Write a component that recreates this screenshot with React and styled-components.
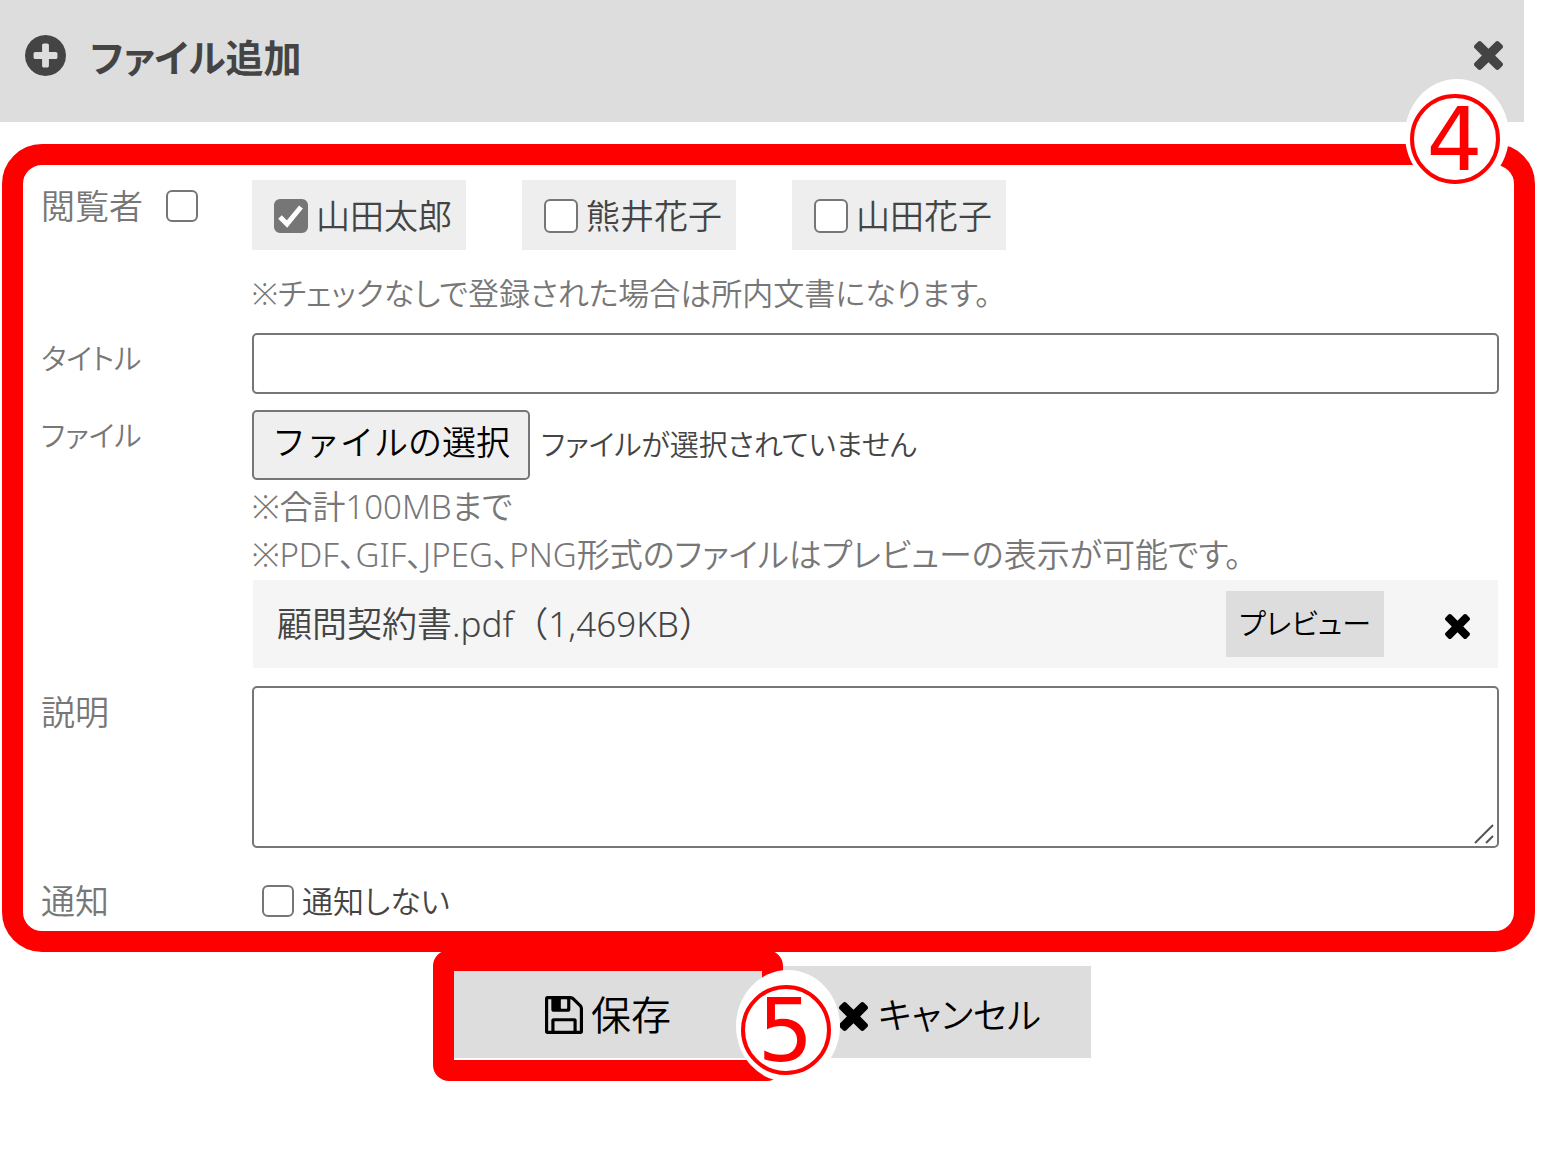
import React, { useRef, useState } from 'react'
import styled, { createGlobalStyle, css } from 'styled-components'

const members = [
  { id: 'm1', name: '山田太郎', checked: true },
  { id: 'm2', name: '熊井花子', checked: false },
  { id: 'm3', name: '山田花子', checked: false },
]

function TimesIcon({ size }) {
  return (
    <svg width={size} height={size} viewBox="302 366 1188 1188" fill="currentColor" aria-hidden="true">
      <path d="M1490 1322q0 40-28 68l-136 136q-28 28-68 28t-68-28l-294-294-294 294q-28 28-68 28t-68-28l-136-136q-28-28-28-68t28-68l294-294-294-294q-28-28-28-68t28-68l136-136q28-28 68-28t68 28l294 294 294-294q28-28 68-28t68 28l136 136q28 28 28 68t-28 68l-294 294 294 294q28 28 28 68z" />
    </svg>
  )
}

function PlusCircleIcon({ size }) {
  return (
    <svg width={size} height={size} viewBox="128 128 1536 1536" fill="currentColor" aria-hidden="true">
      <path d="M1344 960v-128q0-26-19-45t-45-19h-256v-256q0-26-19-45t-45-19h-128q-26 0-45 19t-19 45v256h-256q-26 0-45 19t-19 45v128q0 26 19 45t45 19h256v256q0 26 19 45t45 19h128q26 0 45-19t19-45v-256h256q26 0 45-19t19-45zm320-64q0 209-103 385.5t-279.5 279.5-385.5 103-385.5-103-279.5-279.5-103-385.5 103-385.5 279.5-279.5 385.5-103 385.5 103 279.5 279.5 103 385.5z" />
    </svg>
  )
}

function FloppyIcon({ size }) {
  return (
    <svg width={size} height={size} viewBox="128 128 1536 1536" fill="currentColor" aria-hidden="true">
      <path d="M512 1536h768v-384h-768v384zm896 0h128v-896q0-14-10-38.5t-20-34.5l-281-281q-10-10-34-20t-39-10v416q0 40-28 68t-68 28h-576q-40 0-68-28t-28-68v-416h-128v1280h128v-416q0-40 28-68t68-28h832q40 0 68 28t28 68v416zm-384-928v-320q0-13-9.5-22.5t-22.5-9.5h-192q-13 0-22.5 9.5t-9.5 22.5v320q0 13 9.5 22.5t22.5 9.5h192q13 0 22.5-9.5t9.5-22.5zm640 32v928q0 40-28 68t-68 28h-1344q-40 0-68-28t-28-68v-1344q0-40 28-68t68-28h928q40 0 88 20t76 48l280 280q28 28 48 76t20 88z" />
    </svg>
  )
}

export default function App() {
  const fileRef = useRef(null)
  const [viewers, setViewers] = useState(members)

  const toggle = (id) =>
    setViewers(viewers.map((v) => (v.id === id ? { ...v, checked: !v.checked } : v)))

  return (
    <Page>
      <GlobalStyle />
      <Header>
        <PlusCircleIcon size={41} />
        <h1>ファイル追加</h1>
        <IconButton type="button" aria-label="閉じる">
          <TimesIcon size={29} />
        </IconButton>
      </Header>

      <Form>
        <Badge $spot="form"><span>4</span></Badge>

        <Row>
          <Label as="div">
            <label htmlFor="all">閲覧者</label>
            <Check id="all" type="checkbox" $size={32} />
          </Label>
          <div>
            <Chips>
              {viewers.map((v) => (
                <Chip key={v.id}>
                  <Check type="checkbox" $size={34} checked={v.checked} onChange={() => toggle(v.id)} />
                  <span>{v.name}</span>
                </Chip>
              ))}
            </Chips>
            <Note $top={19} $size={31}>※チェックなしで登録された場合は所内文書になります。</Note>
          </div>
        </Row>

        <Row>
          <Label htmlFor="title" $kana>タイトル</Label>
          <TextInput id="title" type="text" />
        </Row>

        <Row>
          <Label htmlFor="file" $kana>ファイル</Label>
          <div>
            <Picker>
              <input ref={fileRef} id="file" type="file" tabIndex={-1} />
              <PickButton type="button" onClick={() => fileRef.current.click()}>ファイルの選択</PickButton>
              <span>ファイルが選択されていません</span>
            </Picker>
            <Note $top={3}>※合計100MBまで</Note>
            <Note>※PDF、GIF、JPEG、PNG形式のファイルはプレビューの表示が可能です。</Note>
            <FileItem>
              <span>顧問契約書.pdf（1,469KB）</span>
              <PreviewButton type="button">プレビュー</PreviewButton>
              <IconButton type="button" aria-label="削除" $dark>
                <TimesIcon size={25} />
              </IconButton>
            </FileItem>
          </div>
        </Row>

        <Row>
          <Label htmlFor="memo">説明</Label>
          <MemoBox>
            <textarea id="memo" />
            <svg width="22" height="22" viewBox="0 0 22 22" stroke="#555" strokeWidth="2" aria-hidden="true">
              <path d="M1 20L19 2M12 20L19 13" />
            </svg>
          </MemoBox>
        </Row>

        <Row $top={11}>
          <Label as="div">通知</Label>
          <Option>
            <Check type="checkbox" $size={32} />
            通知しない
          </Option>
        </Row>
      </Form>

      <Actions>
        <SaveFrame>
          <SaveButton type="button">
            <FloppyIcon size={38} />
            保存
          </SaveButton>
          <Badge $spot="save"><span>5</span></Badge>
        </SaveFrame>
        <CancelButton type="button">
          <TimesIcon size={29} />
          キャンセル
        </CancelButton>
      </Actions>
    </Page>
  )
}

const GlobalStyle = createGlobalStyle`
*{
  box-sizing: border-box;
}

body{
  margin: 0;
  background-color: #fff;
}

button, input, textarea{
  font: inherit;
  margin: 0;
}
`

const Page = styled.main`
  min-height: 100vh;
  color: #444;
  font-family: "Noto Sans", "Noto Sans CJK JP", sans-serif;
  font-size: 34px;
  font-weight: 350;
  line-height: 48px;
  font-feature-settings: "palt";
`

const Header = styled.header`
  display: flex;
  align-items: center;
  height: 122px;
  margin-right: 37px;
  padding: 0 21px 12px 25px;
  background-color: #ddd;

  h1{
    flex: 1;
    margin: 0 0 0 24px;
    padding-top: 4px;
    font-size: 38px;
    font-weight: 700;
  }
`

const IconButton = styled.button`
  display: flex;
  padding: ${(p) => (p.$dark ? '5px 0 0' : '0')};
  border: none;
  background: none;
  color: ${(p) => (p.$dark ? '#000' : '#444')};
  cursor: pointer;
`

const Form = styled.form`
  position: relative;
  display: flex;
  flex-direction: column;
  gap: 16px;
  margin: 22px 26px 0 2px;
  padding: 15px 15px 6px 18px;
  border: 21px solid #f00;
  border-radius: 40px;
`

const spots = {
  form: css`
    top: -86px;
    right: 5px;
  `,
  save: css`
    top: -1px;
    right: -78px;
  `,
}

/* numbered marker lying over a frame */
const Badge = styled.div`
  position: absolute;
  z-index: 2;
  display: flex;
  align-items: center;
  justify-content: center;
  width: 104px;
  height: 112px;
  padding: 8px 5px 0 0;
  border-radius: 50%;
  background-color: #fff;

  span{
    width: 90px;
    height: 90px;
    border: 4px solid #f00;
    border-radius: 50%;
    color: #f00;
    font-family: "DejaVu Sans", sans-serif;
    font-size: 88px;
    font-weight: 400;
    line-height: 84px;
    text-align: center;
  }
  ${(p) => spots[p.$spot]}
`

const Row = styled.div`
  display: grid;
  grid-template-columns: 211px minmax(0, 1fr);
  align-items: start;
  margin-top: ${(p) => p.$top || 0}px;
`

const Label = styled.label`
  display: flex;
  align-items: center;
  gap: 23px;
  padding-top: 2px;
  color: #777;
  font-size: ${(p) => (p.$kana ? 29 : 34)}px;
`

const Check = styled.input`
  appearance: none;
  flex: none;
  width: ${(p) => p.$size}px;
  height: ${(p) => p.$size}px;
  border: 2px solid #767676;
  border-radius: 6px;
  background: #fff center / 26px no-repeat;

  &:checked{
    background-color: #767676;
    background-image: url("data:image/svg+xml,%3Csvg xmlns='http://www.w3.org/2000/svg' viewBox='0 0 26 26'%3E%3Cpath d='M2 14l7 7L23 4' fill='none' stroke='white' stroke-width='5'/%3E%3C/svg%3E");
  }
`

const Chips = styled.div`
  display: flex;
  flex-wrap: wrap;
  gap: 16px 56px;
`

const Chip = styled.label`
  display: flex;
  align-items: center;
  gap: 8px;
  height: 70px;
  padding: 2px 14px 0 22px;
  background-color: #eee;
`

const Note = styled.p`
  margin: ${(p) => p.$top || 0}px 0 0;
  color: #777;
  font-size: ${(p) => p.$size || 33}px;
`

const fieldBorder = css`
  border: 2px solid #767676;
  border-radius: 5px;
`

const TextInput = styled.input`
  width: 100%;
  height: 61px;
  padding: 0 8px;
  ${fieldBorder}
`

const Picker = styled.div`
  display: flex;
  align-items: center;
  gap: 11px;

  input{
    position: absolute;
    width: 1px;
    height: 1px;
    opacity: 0;
  }

  span{
    font-size: 29px;
  }
`

const PickButton = styled.button`
  height: 70px;
  padding: 0 18px 6px;
  background-color: #efefef;
  color: #000;
  font-feature-settings: normal;
  ${fieldBorder}
`

const FileItem = styled.div`
  display: flex;
  align-items: center;
  height: 88px;
  margin: 1px 1px 2px;
  padding: 0 28px 0 24px;
  background-color: #f5f5f5;

  span{
    flex: 1;
    font-size: 35px;
    font-feature-settings: normal;
  }
`

const PreviewButton = styled.button`
  height: 66px;
  margin-right: 61px;
  padding: 0 13px;
  border: none;
  background-color: #ddd;
  color: #000;
  font-size: 29px;
`

const MemoBox = styled.div`
  position: relative;
  display: flex;

  textarea{
    width: 100%;
    height: 162px;
    padding: 8px;
    resize: none;
    ${fieldBorder}
  }

  svg{
    position: absolute;
    right: 3px;
    bottom: 3px;
  }
`

const Option = styled.label`
  display: flex;
  align-items: center;
  gap: 8px;
  padding: 2px 0 0 10px;
  font-size: 31px;
`

const Actions = styled.div`
  position: relative;
  display: flex;
  align-items: flex-start;
  justify-content: center;
  margin: -2px 37px 0 0;
`

const SaveFrame = styled.div`
  position: relative;
  width: 350px;
  height: 131px;
  border: 21px solid #f00;
  border-radius: 16px;
`

const ActionButton = styled.button`
  display: flex;
  align-items: center;
  justify-content: center;
  width: 308px;
  border: none;
  background-color: #ddd;
  color: #000;
`

const SaveButton = styled(ActionButton)`
  gap: 8px;
  height: 87px;
  font-size: 40px;
`

const CancelButton = styled(ActionButton)`
  gap: 10px;
  height: 92px;
  margin-top: 16px;
  padding: 8px 0 0 6px;
  font-size: 36px;
`
